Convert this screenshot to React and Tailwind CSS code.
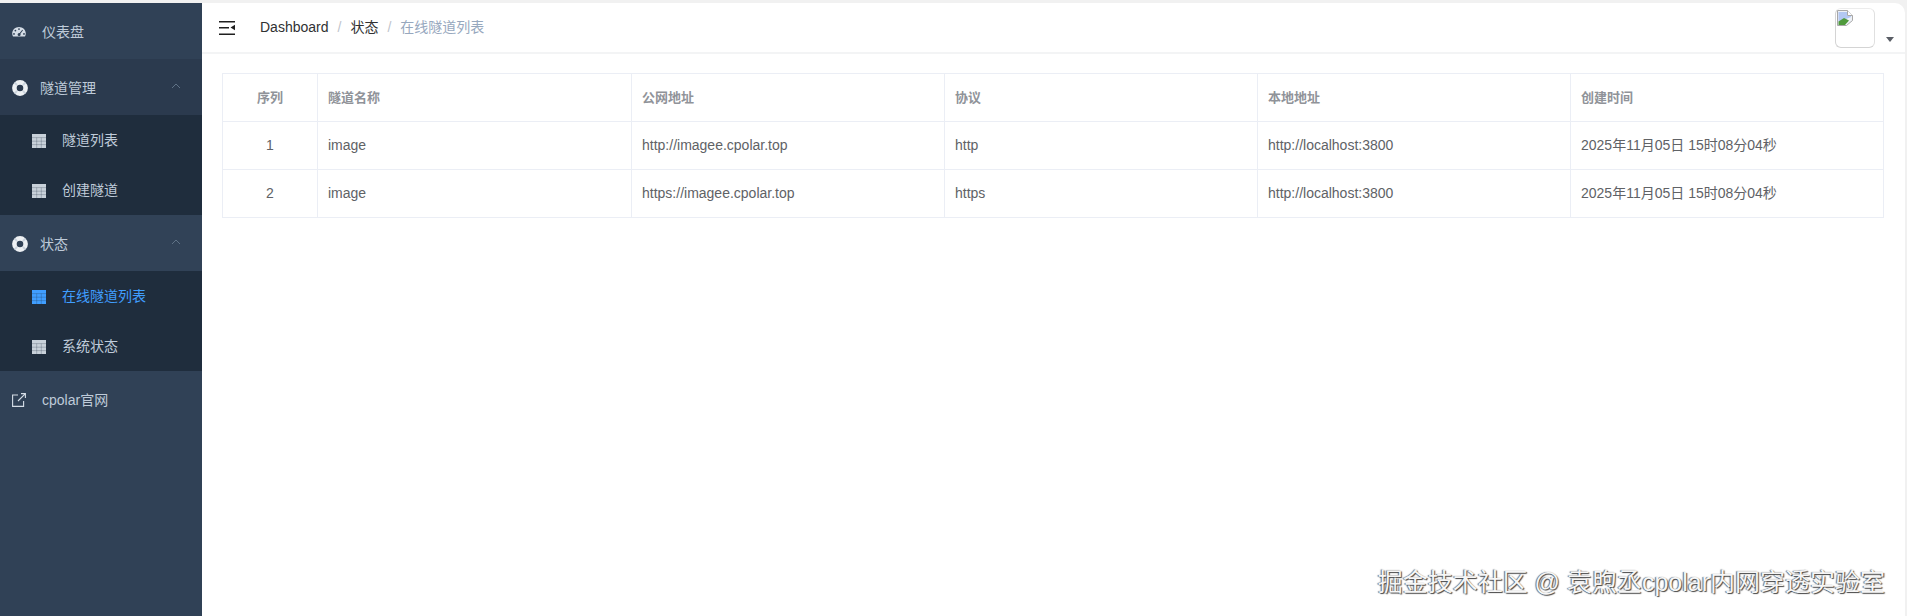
const FONT = "font-['Liberation_Sans','Noto_Sans_CJK_SC',sans-serif]";

function GaugeIcon() {
  return (
    <svg width="14" height="14" viewBox="0 0 14 14" className="shrink-0">
      <path fill="currentColor" fillRule="evenodd" d="M7 2C3.400 2 .2 4.800.2 8.500c0 1 .3 2 .7 2.800.1.200.3.300.5.300h11.200c.2 0 .4-.1.5-.3.4-.8.7-1.800.7-2.800C13.800 4.800 10.600 2 7 2zM7 3.200a.9.900 0 1 1 0 1.800.9.900 0 0 1 0-1.800zM3.400 4.700a.9.900 0 1 1 0 1.800.9.900 0 0 1 0-1.800zM2 8a.9.900 0 1 1 0 1.800A.9.900 0 0 1 2 8zM12 8a.9.900 0 1 1 0 1.800.9.900 0 0 1 0-1.800zM10.300 4.800l.7.500-2.600 3.500c.1.200.2.400.2.700a1.500 1.500 0 1 1-1.500-1.500c.2 0 .4 0 .6.100z" />
    </svg>
  );
}

function RingIcon() {
  return (
    <svg width="16" height="16" viewBox="0 0 16 16" className="shrink-0">
      <circle cx="8" cy="8" r="5.600" fill="none" stroke="currentColor" strokeWidth="4.600" />
      <path d="M2.400 2.400l2.600 2.600M13.600 2.400L11 5M2.400 13.600L5 11M13.600 13.600L11 11" stroke="#aebccb" strokeWidth="1.800" opacity="0.55" />
    </svg>
  );
}

function TableIcon() {
  return (
    <svg width="14" height="14" viewBox="0 0 14 14" className="shrink-0">
      <path fill="currentColor" d="M0 0h14v14H0z" />
      <path d="M0 3.600h14M0 7.200h14M0 10.600h14M4.700 3.600V14M9.300 3.600V14" stroke="#1f2d3d" strokeOpacity="0.3" strokeWidth="0.8" fill="none" />
    </svg>
  );
}

function LinkIcon() {
  return (
    <svg width="14" height="14" viewBox="0 0 14 14" fill="none" stroke="currentColor" strokeWidth="1.100" className="shrink-0">
      <path d="M6 2H.6v11.400h11V8" />
      <path d="M6 8l7.400-7.400M9 .6h4.400V5" />
    </svg>
  );
}

function FoldIcon() {
  return (
    <svg width="16" height="14" viewBox="0 0 16 14" className="shrink-0">
      <path fill="#1f1f1f" d="M0 0h16v1.500H0zM0 6h10v1.500H0zM0 12.500h16V14H0zM16 3.800v5.400l-4.500-2.700z" />
    </svg>
  );
}

function BrokenImage() {
  return (
    <svg width="16" height="16" viewBox="0 0 16 16" className="shrink-0">
      <path d="M.5.500h10l5 5v5l-6 5H.5z" fill="#eef1f6" stroke="#a8a8a8" />
      <path d="M10.500.500v5h5" fill="#fff" stroke="#a8a8a8" />
      <path d="M1.500 2h8.500v4h4v1l-12.500 5z" fill="#b3c8f2" />
      <path d="M1.500 15v-3.500L7 8l5 2.500-4 4.500z" fill="#4f9a3c" />
    </svg>
  );
}

function Chevron() {
  return (
    <svg width="10" height="6" viewBox="0 0 10 6" fill="none" stroke="#5f7286" strokeWidth="1" className="mb-[4px] ml-auto mr-[21px]">
      <path d="M1 5l4-4 4 4" />
    </svg>
  );
}

function TopItem({ icon, label }) {
  return (
    <div className="flex h-[56px] items-center pl-[12px] pt-[2px] text-[14px] text-[#bfcbd9]">
      <span className="flex w-[30px] text-[#d5dde6]">{icon}</span>
      {label}
    </div>
  );
}

function Group({ label, tint, children }) {
  return (
    <>
      <div className={`flex h-[56px] items-center pl-[12px] pt-[2px] text-[14px] text-[#bfcbd9] ${tint}`}>
        <span className="flex w-[28px] text-[#eef1f4]"><RingIcon /></span>
        {label}
        <Chevron />
      </div>
      <div className="bg-[#1f2d3d]">{children}</div>
    </>
  );
}

function SubItem({ label, active }) {
  return (
    <div className={`flex h-[50px] items-center pl-[32px] pt-[1px] text-[14px] ${active ? "text-[#409eff]" : "text-[#bfcbd9]"}`}>
      <span className={`flex w-[30px] ${active ? "text-[#409eff]" : "text-[#c8d1da]"}`}><TableIcon /></span>
      {label}
    </div>
  );
}

const columns = ["公网地址", "协议", "本地地址", "创建时间"];
const rows = [
  ["1", "image", "http://imagee.cpolar.top", "http", "http://localhost:3800", "2025年11月05日 15时08分04秒"],
  ["2", "image", "https://imagee.cpolar.top", "https", "http://localhost:3800", "2025年11月05日 15时08分04秒"],
];

export default function App() {
  return (
    <div className={`relative flex h-[616px] w-[1907px] flex-col overflow-hidden bg-[#f1f1f1] ${FONT}`}>
      <div className="h-[3px] shrink-0" />
      <div className="flex min-h-0 flex-1">
        <aside className="w-[202px] shrink-0 bg-[#304156]">
          <TopItem icon={<GaugeIcon />} label="仪表盘" />
          <Group label="隧道管理" tint="bg-[#2b3a4e]">
            <SubItem label="隧道列表" />
            <SubItem label="创建隧道" />
          </Group>
          <Group label="状态" tint="bg-[#314257]">
            <SubItem label="在线隧道列表" active />
            <SubItem label="系统状态" />
          </Group>
          <TopItem icon={<LinkIcon />} label="cpolar官网" />
        </aside>
        <main className="mr-[2px] min-w-0 flex-1 rounded-tr-[10px] bg-white">
          <header className="flex h-[51px] items-center border-b-[2px] border-[#f3f4f5] pl-[17px] text-[14px]">
            <FoldIcon />
            <nav className="ml-[25px] flex items-center text-[#303133]">
              <span>Dashboard</span>
              <span className="mx-[9px] text-[#c0c4cc]">/</span>
              <span>状态</span>
              <span className="mx-[9px] text-[#c0c4cc]">/</span>
              <span className="text-[#97a8be]">在线隧道列表</span>
            </nav>
            <div className="ml-auto mr-[11px] flex items-end">
              <div className="h-[40px] w-[40px] rounded-[6px] border border-[#d4d4d4] border-t-[#ececec] border-r-[#e0e0e0] p-[1px]">
                <BrokenImage />
              </div>
              <span className="mb-[6px] ml-[11px] h-0 w-0 border-x-[4px] border-t-[5px] border-x-transparent border-t-[#5a5e66]" />
            </div>
          </header>
          <div className="pl-[20px] pt-[19px]">
            <table className="w-[1661px] table-fixed border-collapse border border-[#ebeef5] text-[14px] text-[#606266]">
              <colgroup>
                <col className="w-[95px]" />
                <col className="w-[314px]" />
                <col className="w-[313px]" />
                <col className="w-[313px]" />
                <col className="w-[313px]" />
                <col className="w-[313px]" />
              </colgroup>
              <thead>
                <tr className="h-[48px] text-[13px] font-bold text-[#909399]">
                  <th className="border border-[#ebeef5] text-center">序列</th>
                  <th className="border border-[#ebeef5] pl-[10px] text-left">隧道名称</th>
                  {columns.map((c) => (
                    <th key={c} className="border border-[#ebeef5] pl-[10px] text-left">{c}</th>
                  ))}
                </tr>
              </thead>
              <tbody>
                {rows.map((row) => (
                  <tr key={row[0]} className="h-[48px]">
                    {row.map((cell, i) => (
                      <td key={i} className={`border border-[#ebeef5] ${i === 0 ? "text-center" : "pl-[10px]"}`}>{cell}</td>
                    ))}
                  </tr>
                ))}
              </tbody>
            </table>
          </div>
        </main>
      </div>
      <div className="absolute bottom-[18px] right-[22px] text-[25px] leading-[32px] text-[#f6f6f6] [text-shadow:1px_1px_1px_#444,-1px_0_1px_#666]">
        掘金技术社区 @ 袁煦丞cpolar内网穿透实验室
      </div>
    </div>
  );
}
